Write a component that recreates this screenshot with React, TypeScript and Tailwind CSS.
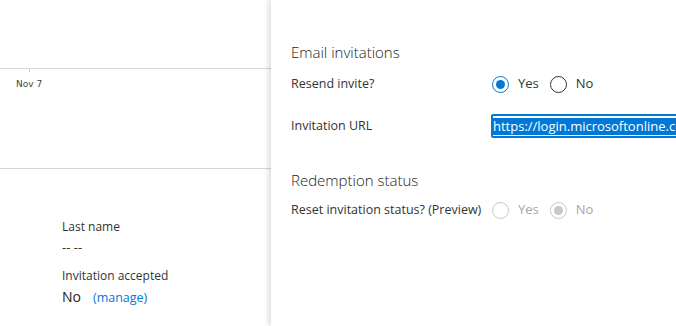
import React from 'react';

const font = { fontFamily: '"Open Sans", "Noto Sans", sans-serif' };

type RadioProps = { label: string; checked?: boolean; disabled?: boolean };

const Radio: React.FC<RadioProps> = ({ label, checked, disabled }) => {
  const ring = disabled ? 'border-[#c8c8c8]' : checked ? 'border-[#0078d4]' : 'border-[#333]';
  const dot = disabled ? 'bg-[#c8c8c8]' : 'bg-[#0078d4]';
  return (
    <div className="flex items-center">
      <span className={`w-[17px] h-[17px] rounded-full border ${ring} flex items-center justify-center bg-white`}>
        {checked && <span className={`w-[9px] h-[9px] rounded-full ${dot}`}></span>}
      </span>
      <span className={`ml-[9px] text-[13px] ${disabled ? 'text-[#a6a6a6]' : 'text-[#333]'}`}>{label}</span>
    </div>
  );
};

export default function App() {
  return (
    <div className="flex w-[676px] h-[326px] overflow-hidden bg-white" style={font}>
      {/* left page behind the blade */}
      <div className="w-[271px] shrink-0 flex flex-col">
        <div className="h-[69px] border-b border-[#d6d6d6]"></div>
        <div className="relative h-[100px] border-b border-[#d6d6d6]">
          <div className="absolute left-[29px] top-0 w-px h-[3px] bg-[#ccc]"></div>
          <div className="pl-[16px] pt-[9px] text-[#444]" style={{ fontFamily: '"DejaVu Sans", sans-serif', fontSize: 9 }}>Nov 7</div>
        </div>
        <div className="pl-[62px] pt-[50px] text-[#333]">
          <div className="text-[12px] leading-[16px]">Last name</div>
          <div className="text-[13px] leading-[18px] mt-[3px]">-- --</div>
          <div className="text-[12px] leading-[16px] mt-[12px]">Invitation accepted</div>
          <div className="flex items-baseline mt-[3px] leading-[20px]">
            <span className="text-[14px] text-[#222]">No</span>
            <span className="text-[12.5px] text-[#0078d4] ml-[12px]">(manage)</span>
          </div>
        </div>
      </div>

      {/* blade */}
      <div className="relative z-10 flex-1 min-w-0 bg-white shadow-[-3px_0_5px_rgba(0,0,0,0.12)] pl-[20px] pt-[42px] overflow-hidden">
        <h2 className="text-[15px] leading-[20px] font-light text-[#222]">Email invitations</h2>

        <div className="flex items-center h-[28px] mt-[8px]">
          <div className="w-[201px] shrink-0 text-[12.5px] text-[#333]">Resend invite?</div>
          <div className="flex items-center gap-[11px]">
            <Radio label="Yes" checked />
            <Radio label="No" />
          </div>
        </div>

        <div className="flex items-center h-[24px] mt-[16px]">
          <div className="w-[200px] shrink-0 text-[12.5px] text-[#333]">Invitation URL</div>
          <div className="w-[300px] shrink-0 h-[24px] border-2 border-[#0078d4] rounded-[2px] flex items-center overflow-hidden">
            <div className="h-full w-[6px] bg-[#e6e6e6]"></div>
            <span className="bg-[#0078d7] text-white text-[13px] leading-[17px] whitespace-nowrap">https://login.microsoftonline.com/redeem?rd=https</span>
          </div>
        </div>

        <h2 className="text-[15px] leading-[20px] font-light text-[#222] mt-[32px]">Redemption status</h2>

        <div className="flex items-center h-[24px] mt-[8px]">
          <div className="w-[201px] shrink-0 text-[12.5px] text-[#333]">Reset invitation status? (Preview)</div>
          <div className="flex items-center gap-[11px]">
            <Radio label="Yes" disabled />
            <Radio label="No" checked disabled />
          </div>
        </div>
      </div>
    </div>
  );
}
